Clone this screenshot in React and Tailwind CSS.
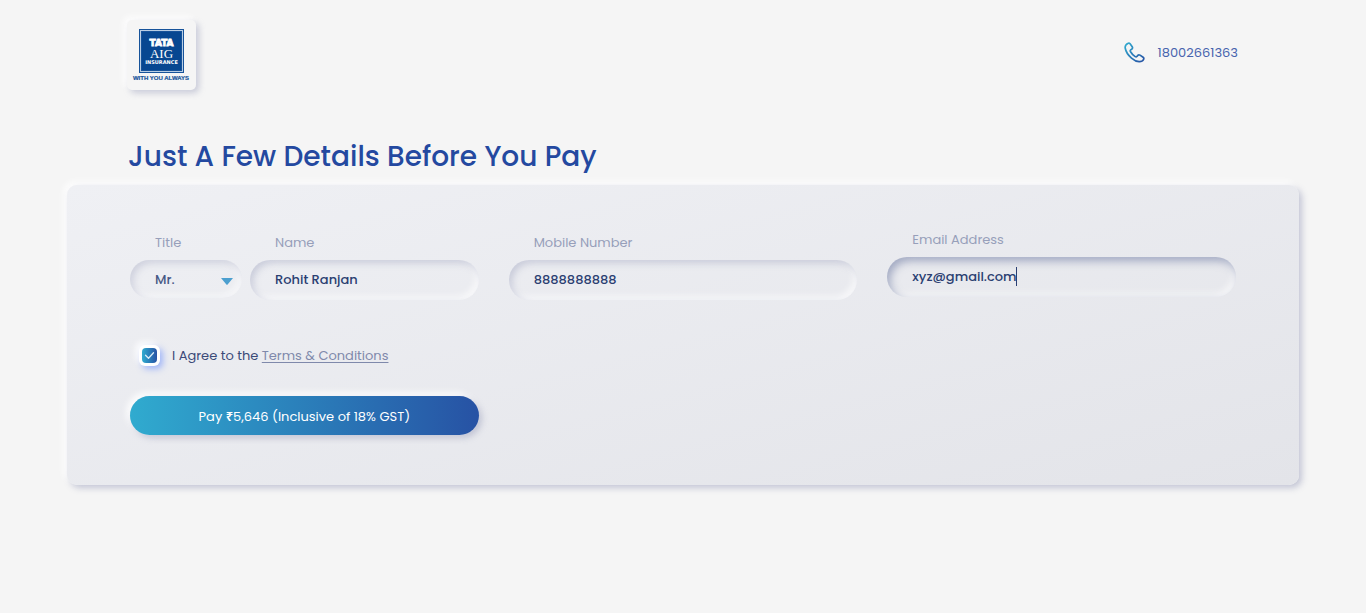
import { useState } from "react";

const inset =
  "w-full rounded-full bg-transparent text-[#2b3f72] font-medium text-[13px] pl-[25px] pr-5 outline-none shadow-[inset_3px_3px_7px_rgba(136,139,175,0.35),inset_-3px_-3px_7px_rgba(255,255,255,0.8)]";
const insetFocused =
  "w-full rounded-full bg-transparent text-[#2b3f72] font-medium text-[13px] pl-[25px] pr-5 outline-none caret-transparent shadow-[inset_3px_4px_8px_rgba(90,104,150,0.5),inset_-3px_-3px_7px_rgba(255,255,255,0.8)]";
const labelClass = "block pl-[25px] mb-[6px] text-[13px] leading-[22px] text-[#979fba]";

function Logo() {
  return (
    <div className="flex h-[70px] w-[69px] items-center justify-center rounded-[5px] bg-[#f5f5f5] shadow-[3px_3px_6px_rgba(136,139,175,0.4),-3px_-3px_7px_#ffffff]">
      <svg width="61" height="60" viewBox="0 0 61 60" role="img" aria-label="Tata AIG Insurance">
        <rect x="8" y="4" width="45" height="44" fill="#17539a" />
        <rect x="9.500" y="5.500" width="42" height="41" fill="none" stroke="#b9cee4" strokeWidth="1" />
        <rect x="11" y="7" width="39" height="38" fill="#074791" />
        <g fill="#fff" textAnchor="middle">
          <text x="30.500" y="21" fontSize="9" fontWeight="700" fontFamily="DejaVu Sans, sans-serif" stroke="#fff" strokeWidth="0.800">TATA</text>
          <text x="30.500" y="33" fontSize="13" fontFamily="Liberation Serif, serif">AIG</text>
          <text x="30.500" y="39" fontSize="5" fontWeight="700" fontFamily="DejaVu Sans, sans-serif">INSURANCE</text>
        </g>
        <text x="30" y="55" textAnchor="middle" fontSize="6" fontWeight="700" fontFamily="Liberation Sans, sans-serif" fill="#17539a" stroke="#17539a" strokeWidth="0.200">WITH YOU ALWAYS</text>
      </svg>
    </div>
  );
}

function PhoneIcon() {
  return (
    <svg width="22" height="22" viewBox="0 0 22 22" fill="none" aria-hidden="true">
      <defs>
        <linearGradient id="phone" x1="0" y1="0" x2="1" y2="1">
          <stop offset="0" stopColor="#30abcf" />
          <stop offset="1" stopColor="#2752a4" />
        </linearGradient>
      </defs>
      <path
        d="M3.800 1.400C2 2.300.9 3.800 1.200 6c.6 3.700 3 7.200 6.300 10.100 2.400 2.100 5 3.500 7.600 3.600 2.200.1 3.800-.9 4.500-2.300.4-.9.200-1.600-.5-2.100l-3.100-2.200c-.8-.5-1.600-.4-2.200.3l-.9 1.100c-.5.500-1.100.5-1.700.1-2-1.300-3.700-3.100-4.800-5.100-.3-.6-.2-1.200.3-1.600l1.200-.9c.7-.6.8-1.400.3-2.200L6.100 1.800c-.6-.7-1.500-.8-2.300-.4Z"
        stroke="url(#phone)"
        strokeWidth="1.700"
        strokeLinejoin="round"
      />
    </svg>
  );
}

export default function App() {
  const [agreed, setAgreed] = useState(true);
  const [title, setTitle] = useState("Mr.");

  return (
    <div className="min-h-screen bg-[#f5f5f5] px-[67px] pb-12 font-['Poppins','Inter',sans-serif]">
      <header className="flex items-start justify-between pl-[60px] pr-[61px] pt-5">
        <Logo />
        <a href="tel:18002661363" className="mt-[21px] flex items-center gap-3 text-[13px] leading-[23px] text-[#4764ae]">
          <PhoneIcon />
          18002661363
        </a>
      </header>

      <main>
        <h1 className="pl-[61px] pt-[46px] text-[28px] leading-[42px] font-medium text-[#2449a0]">
          Just A Few Details Before You Pay
        </h1>
        <form
          onSubmit={(e) => e.preventDefault()}
          className="mt-[7px] rounded-[10px] bg-linear-[165deg] from-[#eff0f4] to-[#e3e4e9] px-[63px] pt-[44px] pb-[50px] shadow-[3px_3px_6px_rgba(136,139,175,0.45),-3px_-3px_7px_#ffffff]"
        >
          <div className="grid grid-cols-3 gap-[30px]">
            <div className="flex gap-2 pt-[3px]">
              <div className="w-[112px] shrink-0">
                <label htmlFor="title" className={labelClass}>Title</label>
                <div className="relative">
                  <select
                    id="title"
                    value={title}
                    onChange={(e) => setTitle(e.target.value)}
                    className={inset + " h-[38px] appearance-none pt-px opacity-85"}
                  >
                    <option>Mr.</option>
                    <option>Ms.</option>
                    <option>Mrs.</option>
                  </select>
                  <svg width="12" height="7" viewBox="0 0 12 7" className="pointer-events-none absolute right-[9px] top-[18px]" aria-hidden="true">
                    <path d="M0 0h12L6.800 6.200a1 1 0 0 1-1.600 0Z" fill="#4c9fcf" />
                  </svg>
                </div>
              </div>
              <div className="min-w-0 flex-1">
                <label htmlFor="name" className={labelClass}>Name</label>
                <input id="name" type="text" defaultValue="Rohit Ranjan" className={inset + " h-10"} />
              </div>
            </div>
            <div className="pt-[3px]">
              <label htmlFor="mobile" className={labelClass}>Mobile Number</label>
              <input id="mobile" type="tel" defaultValue="8888888888" className={inset + " h-10"} />
            </div>
            <div>
              <label htmlFor="email" className={labelClass}>Email Address</label>
              <div className="relative">
                <input id="email" type="email" defaultValue="xyz@gmail.com" className={insetFocused + " h-10"} />
                <span className="pointer-events-none absolute left-[129px] top-[10px] h-[19px] w-px bg-[#2b3f72]" />
              </div>
            </div>
          </div>

          <div className="mt-[43px] flex items-center gap-3 pl-[9px] text-[13px] leading-[22px] text-[#3b4a78]">
            <span className="relative flex size-[21px] items-center justify-center rounded-[6px] bg-white shadow-[3px_3px_6px_rgba(90,130,255,0.5),-3px_-3px_6px_#ffffff]">
              <input
                id="agree"
                type="checkbox"
                checked={agreed}
                onChange={(e) => setAgreed(e.target.checked)}
                className="size-[15px] appearance-none rounded-[4px] bg-linear-to-r from-[#30abcf] to-[#2752a4]"
              />
              {agreed && (
                <svg width="15" height="15" viewBox="0 0 15 15" className="pointer-events-none absolute" aria-hidden="true">
                  <path d="m3.500 7.200 3 3 5-5.400" fill="none" stroke="#d9ecf7" strokeWidth="1.300" strokeLinecap="round" strokeLinejoin="round" />
                </svg>
              )}
            </span>
            <label htmlFor="agree" className="pt-[2px]">
              I Agree to the{" "}
              <a href="#terms" className="text-[#7f89ab] underline underline-offset-2">Terms &amp; Conditions</a>
            </label>
          </div>

          <div className="mt-[29px] grid grid-cols-3 gap-[30px]">
            <button
              type="submit"
              className="h-[39px] rounded-full bg-linear-to-r from-[#30abcf] to-[#2752a4] pt-[2px] text-[13px] text-white shadow-[3px_3px_6px_rgba(136,139,175,0.4),-3px_-3px_7px_#ffffff]"
            >
              Pay <span className="font-['Noto_Sans',sans-serif] font-semibold">₹</span>5,646 (Inclusive of 18% GST)
            </button>
          </div>
        </form>
      </main>
    </div>
  );
}
